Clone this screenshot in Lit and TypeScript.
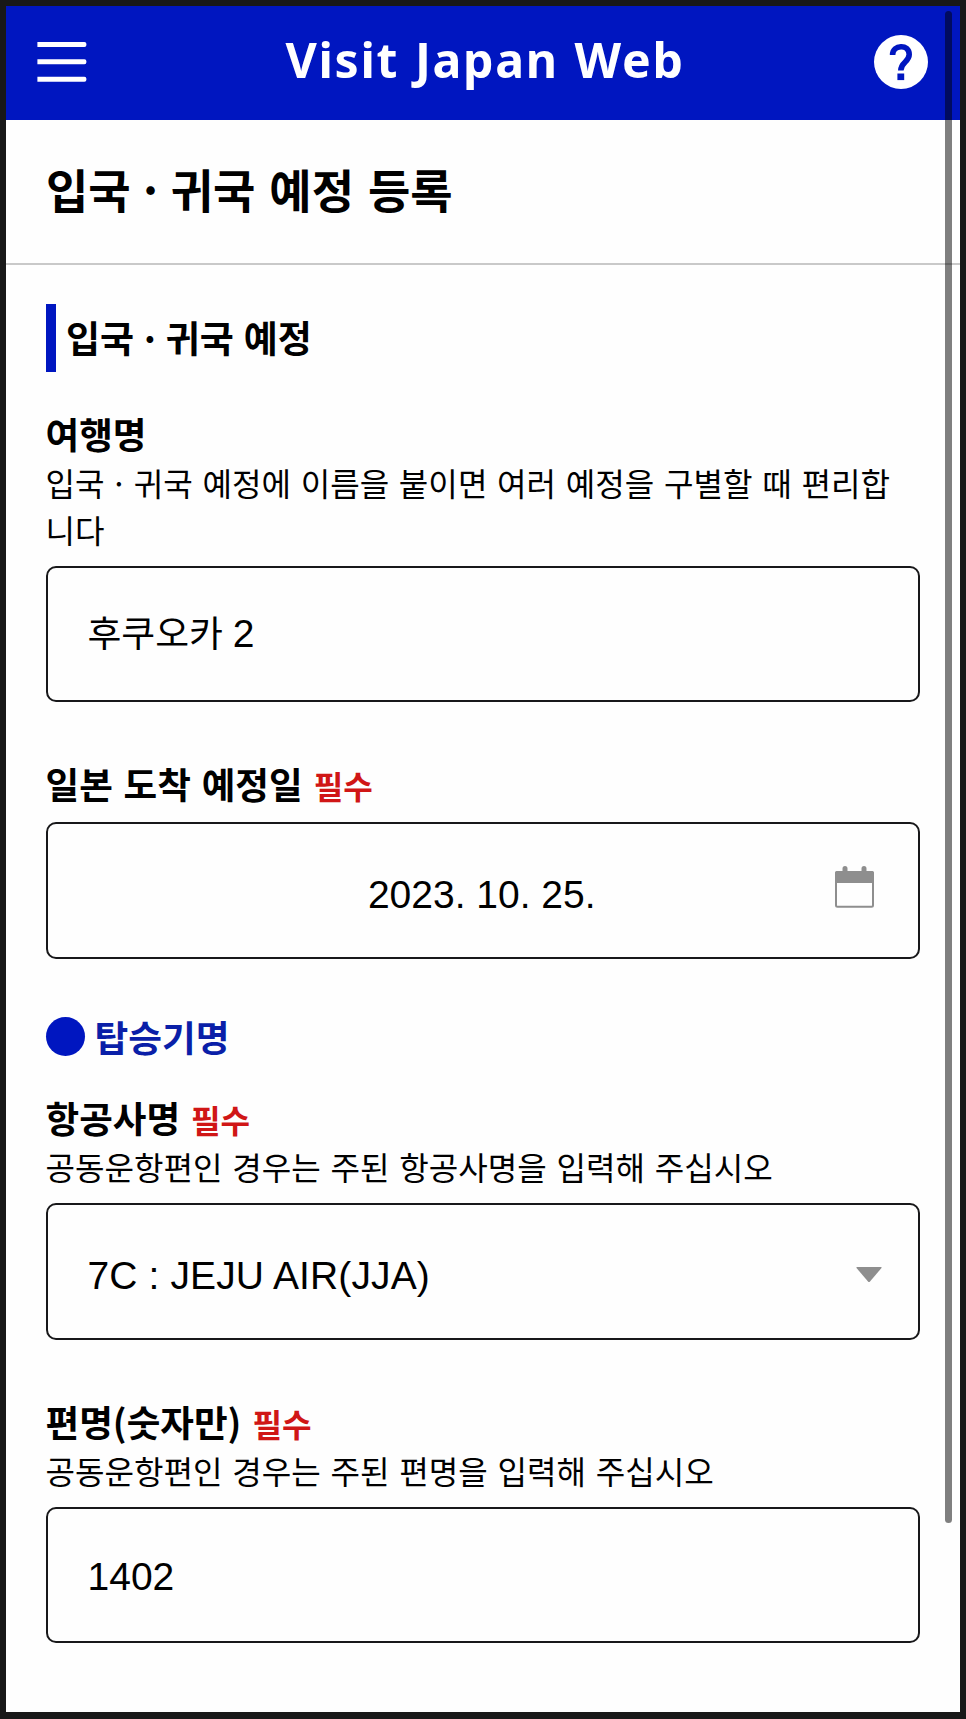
import { LitElement, html, css, nothing } from "lit";
import { customElement, property } from "lit/decorators.js";

@customElement("form-field")
class FormField extends LitElement {
  static styles = css`
    :host { display: block; }
    .label {
      display: flex; align-items: baseline; gap: 11px;
      height: 50px; line-height: 46px; white-space: nowrap;
      font-size: 36.6px; font-weight: 700; word-spacing: 2.5px;
    }
    .required { color: #d01616; font-size: 32.1px; font-weight: 700; }
    .help {
      margin-top: -2px; padding: 0 16px 2.5px 0;
      font-size: 32.1px; line-height: 46.5px; word-spacing: 2.5px; word-break: break-all;
    }
    .box {
      box-sizing: border-box; height: 136.5px; margin-top: 11px; padding: 0 44px 0 40px;
      border: 2px solid #18181a; border-radius: 10px;
      display: flex; align-items: center;
      font-family: "Liberation Sans", "Noto Sans CJK KR", sans-serif;
      font-size: 39px;
    }
  `;
  @property() label = "";
  @property({ type: Boolean }) required = false;
  @property({ type: Boolean }) hint = false;
  render() {
    return html`
      <div class="label"><span>${this.label}</span>${this.required ? html`<span class="required">필수</span>` : nothing}</div>
      ${this.hint ? html`<div class="help"><slot name="help"></slot></div>` : nothing}
      <div class="box"><slot></slot></div>
    `;
  }
}

@customElement("app-root")
class AppRoot extends LitElement {
  static styles = css`
    :host {
      display: block; box-sizing: border-box; position: relative;
      width: 966px; height: 1719px; overflow: hidden;
      border: 6px solid #181818; border-bottom-width: 7px;
      background: #fefefe; color: #000;
      font-family: "Noto Sans CJK KR", sans-serif;
    }
    .bar {
      display: grid; grid-template-columns: 54px 1fr 54px; align-items: center;
      height: 114px; box-sizing: border-box; padding: 0 32px 2px 31px;
      background: #0016c0; color: #fff;
    }
    .bar svg { display: block; }
    .brand {
      text-align: center; font-family: "Noto Sans", "Open Sans", sans-serif;
      font-size: 48.2px; font-weight: 700; line-height: 60px; letter-spacing: 1.7px;
      word-spacing: 1.5px; white-space: nowrap; padding: 0 0 6.5px 5px;
    }
    .title {
      margin: 0; height: 145px; box-sizing: border-box; padding: 0 39px 0 40px;
      border-bottom: 2px solid #c9c9c9; line-height: 137px;
      font-size: 46px; font-weight: 700; white-space: nowrap; word-spacing: 3.5px;
    }
    .title .mid { word-spacing: -4px; }
    .content { padding: 39px 40px 0 39.5px; }
    .section {
      margin: 0 0 39px; height: 68px; line-height: 66px; padding-left: 10.5px;
      border-left: 10px solid #0016c0; font-size: 37px; font-weight: 700;
      white-space: nowrap; word-spacing: 1.5px;
    }
    .section .mid { word-spacing: -3.5px; }
    .hint .mid { word-spacing: -1.6px; }
    .group {
      display: flex; align-items: center; gap: 10px; margin: 53px 0 33.5px;
      height: 50px; color: #0a1fa8; font-size: 36.7px; font-weight: 700;
    }
    .group-name { line-height: 48px; padding-bottom: 2px; }
    .dot { width: 39px; height: 39px; border-radius: 50%; background: #0016c0; }
    .next { margin-top: 59px; }
    .korean { font-family: "Noto Sans CJK KR", sans-serif; font-size: 36.8px; }
    .value { flex: 1; white-space: pre; }
    .name { padding-bottom: 5px; word-spacing: -1px; }
    .date { text-align: center; padding: 10px 0 0 41px; }
    .code { padding-top: 9px; letter-spacing: 0.12px; }
    .number { padding-top: 4px; }
    .calendar { display: block; margin-top: -6px; }
    .arrow { display: block; margin: 7px -8px 0 0; }
    .scroll {
      position: absolute; top: 5px; left: 939px; width: 7px; height: 1512px;
      border-radius: 4px; background: rgba(0, 0, 0, 0.5);
    }
  `;
  render() {
    return html`
      <header class="bar">
        <svg width="50" height="42" viewBox="0 0 50 42" fill="#fff">
          <path d="M.4 1h47a2 2 0 0 1 2 2v1a2 2 0 0 1-2 2H.4zM.4 18.300h47a2 2 0 0 1 2 2v1a2 2 0 0 1-2 2H.4zM.4 35.700h47a2 2 0 0 1 2 2v1a2 2 0 0 1-2 2H.4z" />
        </svg>
        <div class="brand">Visit Japan Web</div>
        <svg width="54" height="54" viewBox="0 0 54 54">
          <circle cx="27" cy="27" r="27" fill="#fff" />
          <path d="M18.600 20C18.600 9.500 35.200 8.500 35.200 19.500C35.200 27 26.800 27 26.800 35.500" fill="none" stroke="#0016c0" stroke-width="5.600" />
          <rect x="23.400" y="38.500" width="6.800" height="6.600" fill="#0016c0" />
        </svg>
      </header>
      <h1 class="title">입국<span class="mid"> · </span>귀국 예정 등록</h1>
      <main class="content">
        <h2 class="section">입국<span class="mid"> · </span>귀국 예정</h2>
        <form-field label="여행명" hint>
          <span slot="help" class="hint">입국<span class="mid"> · </span>귀국 예정에 이름을 붙이면 여러 예정을 구별할 때 편리합니다</span>
          <span class="value name"><span class="korean">후쿠오카</span> 2</span>
        </form-field>
        <form-field class="next" label="일본 도착 예정일" required>
          <span class="value date">2023. 10. 25.</span>
          <svg class="calendar" width="39" height="42" viewBox="0 0 39 42">
            <path d="M7.500 6V2.500a2.500 2.500 0 0 1 5 0V6M26.500 6V2.500a2.500 2.500 0 0 1 5 0V6" fill="#8e8e8e" />
            <rect x="1" y="6" width="37" height="34.800" rx="1.500" fill="none" stroke="#8e8e8e" stroke-width="2" />
            <path d="M0 7a2 2 0 0 1 2-2h35a2 2 0 0 1 2 2v10H0z" fill="#8e8e8e" />
          </svg>
        </form-field>
        <div class="group"><span class="dot"></span><span class="group-name">탑승기명</span></div>
        <form-field label="항공사명" hint required>
          <span slot="help">공동운항편인 경우는 주된 항공사명을 입력해 주십시오</span>
          <span class="value code">7C : JEJU AIR(JJA)</span>
          <svg class="arrow" width="26" height="16" viewBox="0 0 26 16">
            <path d="M1 0h24q1 0 .5 1L14 14.500q-1 1-2 0L.5 1Q0 0 1 0z" fill="#8e8e8e" />
          </svg>
        </form-field>
        <form-field class="next" label="편명(숫자만)" hint required>
          <span slot="help">공동운항편인 경우는 주된 편명을 입력해 주십시오</span>
          <span class="value number">1402</span>
        </form-field>
      </main>
      <div class="scroll"></div>
    `;
  }
}
